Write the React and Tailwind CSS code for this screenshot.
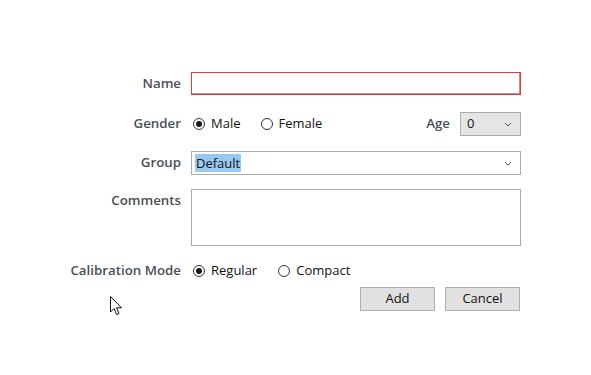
import React from 'react';

const font = { fontFamily: '"Open Sans", "Noto Sans", Arial, sans-serif' };

function Radio({ checked, label, className = '' }) {
  return (
    <label className={`flex items-center gap-[6px] ${className}`}>
      <span className="w-[12px] h-[12px] rounded-full border border-[#333] bg-white flex items-center justify-center">
        {checked && <span className="w-[6px] h-[6px] rounded-full bg-[#1a1a1a]" />}
      </span>
      <span className="text-[13px] text-[#111]">{label}</span>
    </label>
  );
}

function Chevron() {
  return (
    <svg width="8" height="5" viewBox="0 0 8 5" className="text-[#555]">
      <path d="M1 1 L4 4 L7 1" fill="none" stroke="currentColor" strokeWidth="1" />
    </svg>
  );
}

const Label = ({ children, className = '' }) => (
  <div className={`text-right text-[13.3px] font-semibold text-[#4a4e57] ${className}`}>{children}</div>
);

export default function App() {
  return (
    <div className="relative w-[591px] h-[375px] bg-white" style={font}>
      <div className="pt-[72px] grid grid-cols-[181px_330px] gap-x-[10px]">
        {/* Name */}
        <Label className="self-center">Name</Label>
        <div className="h-[23px] border border-[#f03434] shadow-[inset_-1px_-1px_0_#9a9a9a]" />

        {/* Gender */}
        <Label className="self-center mt-[17px]">Gender</Label>
        <div className="mt-[17px] flex items-center h-[24px] pl-[2px]">
          <Radio checked label="Male" />
          <Radio label="Female" className="ml-[20px]" />
          <span className="ml-auto mr-[10px] text-[13.3px] font-semibold text-[#4a4e57]">Age</span>
          <div className="w-[61px] h-[24px] bg-[#e5e5e5] border border-[#acacac] flex items-center justify-between pl-[6px] pr-[8px]">
            <span className="text-[13px] text-[#111]">0</span>
            <Chevron />
          </div>
        </div>

        {/* Group */}
        <Label className="self-center mt-[15px]">Group</Label>
        <div className="mt-[15px] h-[24px] border border-[#acacac] bg-white flex items-center justify-between pl-[3px] pr-[8px]">
          <span className="text-[13px] text-[#111] bg-[#99c9ef] px-[1px] leading-[18px]">Default</span>
          <Chevron />
        </div>

        {/* Comments */}
        <Label className="mt-[16px]">Comments</Label>
        <div className="mt-[14px] h-[57px] border border-[#acacac] bg-white" />

        {/* Calibration */}
        <Label className="self-center mt-[15px]">Calibration Mode</Label>
        <div className="mt-[15px] flex items-center h-[20px] pl-[2px]">
          <Radio checked label="Regular" />
          <Radio label="Compact" className="ml-[21px]" />
        </div>

        {/* Buttons */}
        <div />
        <div className="mt-[6px] flex justify-end gap-[10px] pr-[1px]">
          <button className="w-[75px] h-[24px] bg-[#e1e1e1] border border-[#adadad] text-[13px] text-[#111]">Add</button>
          <button className="w-[75px] h-[24px] bg-[#e1e1e1] border border-[#adadad] text-[13px] text-[#111]">Cancel</button>
        </div>
      </div>

      {/* mouse pointer */}
      <svg className="absolute left-[110px] top-[296px]" width="13" height="20" viewBox="0 0 13 20">
        <path d="M0.5 0.5 L0.5 16 L4 12.5 L6.5 18.5 L9 17.5 L6.5 11.8 L11.5 11.8 Z" fill="white" stroke="#111" strokeWidth="1" strokeLinejoin="round" />
      </svg>
    </div>
  );
}
